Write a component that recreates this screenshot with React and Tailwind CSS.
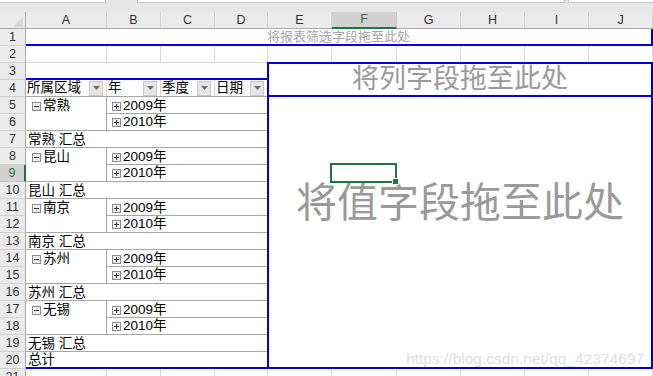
const F = "font-['Liberation_Sans','Noto_Sans_CJK_SC',sans-serif]";
const LIGHT = "border-[#d9d9d9]";
const PIV = "border-[#a6a6a6]";
const BLUE = "border-[#0000e6]";

const columns = [
  { id: "A", w: "w-[81px]" },
  { id: "B", w: "w-[54px]" },
  { id: "C", w: "w-[54px]" },
  { id: "D", w: "w-[53px]" },
  { id: "E", w: "w-[64px]" },
  { id: "F", w: "w-[65px]", active: true },
  { id: "G", w: "w-[64px]" },
  { id: "H", w: "w-[64px]" },
  { id: "I", w: "w-[64px]" },
  { id: "J", w: "w-[64px]" },
];

const cities = ["常熟", "昆山", "南京", "苏州", "无锡"];

function Toggle({ plus }) {
  return (
    <svg width="9" height="9" viewBox="0 0 9 9" className="shrink-0">
      <rect x="0.5" y="0.5" width="8" height="8" fill="#efefef" stroke="#8c8c8c" />
      <path d="M2 4.5h5" stroke="#3a3a3a" />
      {plus && <path d="M4.5 2v5" stroke="#3a3a3a" />}
    </svg>
  );
}

function DropButton() {
  return (
    <span className="w-[14px] h-[15px] mr-[3px] bg-[#e6e6e6] border border-[#c8c8c8] flex items-center justify-center shrink-0">
      <svg width="7" height="4" viewBox="0 0 7 4">
        <path d="M0 0h7L3.5 4z" fill="#6b6b6b" />
      </svg>
    </span>
  );
}

function TopStrip() {
  return (
    <div className="h-[12px] bg-[#e6e6e6] flex items-start">
      <div className="w-[106px] h-[3px] bg-white border-b border-r border-[#c6c6c6]" />
      <div className="ml-[31px] w-[428px] h-[3px] bg-white border-b border-x border-[#c6c6c6]" />
      <div className="ml-[3px] flex-1 h-[3px] bg-white border-b border-l border-[#c6c6c6]" />
    </div>
  );
}

function ColumnHeaders() {
  return (
    <div className="flex h-[17px] bg-[#ebebeb] text-[12.5px] text-[#333]">
      <div className="w-[26px] border-r border-b border-[#ababab] flex items-end justify-end pr-[2px] pb-[1px]">
        <svg width="10" height="10" viewBox="0 0 10 10">
          <path d="M10 0V10H0Z" fill="#d6d6d6" />
        </svg>
      </div>
      {columns.map((c) =>
        c.active ? (
          <div
            key={c.id}
            className={`${c.w} bg-[#d2d2d2] text-[#217346] border-r border-[#c6c6c6] border-b-2 border-b-[#217346] flex items-center justify-center`}
          >
            {c.id}
          </div>
        ) : (
          <div
            key={c.id}
            className={`${c.w} border-r border-[#d0d0d0] border-b border-b-[#ababab] flex items-center justify-center`}
          >
            {c.id}
          </div>
        )
      )}
    </div>
  );
}

function RowHeaders() {
  const rows = Array.from({ length: 21 }, (_, i) => i + 1);
  return (
    <div className="w-[26px] flex flex-col bg-[#ebebeb] text-[12.5px] text-[#333]">
      {rows.map((n) =>
        n === 9 ? (
          <div
            key={n}
            className="h-[17px] shrink-0 bg-[#d2d2d2] text-[#217346] border-b border-[#c6c6c6] border-r-2 border-r-[#217346] flex items-center justify-center"
          >
            {n}
          </div>
        ) : (
          <div
            key={n}
            className="h-[17px] shrink-0 border-b border-[#d0d0d0] border-r border-r-[#ababab] flex items-center justify-center"
          >
            {n}
          </div>
        )
      )}
    </div>
  );
}

function HeaderCell({ label, w, last }) {
  return (
    <div className={`${w} flex items-center justify-between ${last ? "" : `border-r ${LIGHT}`}`}>
      <span className="pl-[1px] pt-[1px]">{label}</span>
      <DropButton />
    </div>
  );
}

function CityGroup({ city }) {
  return (
    <>
      <div className={`flex h-[34px] border-b ${PIV}`}>
        <div className={`w-[81px] border-r ${PIV}`}>
          <div className="h-[17px] flex items-center pl-[6px] pt-[2px]">
            <Toggle />
            <span className="ml-[2px]">{city}</span>
          </div>
        </div>
        <div className="flex-1 flex flex-col">
          <div className={`h-[17px] border-b ${PIV} flex items-center pl-[5px] pt-[2px]`}>
            <Toggle plus />
            <span className="ml-[2px]">2009年</span>
          </div>
          <div className="h-[16px] flex items-center pl-[5px] pt-[1px]">
            <Toggle plus />
            <span className="ml-[2px]">2010年</span>
          </div>
        </div>
      </div>
      <div className={`h-[17px] border-b ${PIV} flex items-center pl-[2px] pt-[2px]`}>
        {city} 汇总
      </div>
    </>
  );
}

function RowArea() {
  return (
    <div className="w-[241px] flex flex-col text-[13.5px]">
      <div className={`flex h-[17px] border-b ${LIGHT}`}>
        <div className={`w-[81px] border-r ${LIGHT}`} />
        <div className={`w-[54px] border-r ${LIGHT}`} />
        <div className={`w-[54px] border-r ${LIGHT}`} />
        <div className="flex-1" />
      </div>
      <div className={`h-[17px] border-b-2 ${BLUE}`} />
      <div className={`flex h-[17px] border-b ${PIV}`}>
        <HeaderCell label="所属区域" w="w-[81px]" />
        <HeaderCell label="年" w="w-[54px]" />
        <HeaderCell label="季度" w="w-[54px]" />
        <HeaderCell label="日期" w="w-[52px]" last />
      </div>
      {cities.map((c) => (
        <CityGroup key={c} city={c} />
      ))}
      <div className={`h-[17px] border-b-2 ${BLUE} flex items-center pl-[2px] pt-[1px]`}>总计</div>
    </div>
  );
}

function DropArea() {
  return (
    <div className="w-[386px] flex flex-col">
      <div className="flex h-[16px]">
        <div className={`w-[65px] border-x ${LIGHT}`} />
        <div className={`w-[65px] border-r ${LIGHT}`} />
        <div className={`w-[64px] border-r ${LIGHT}`} />
        <div className={`w-[64px] border-r ${LIGHT}`} />
        <div className={`w-[64px] border-r ${LIGHT}`} />
        <div className={`w-[64px] border-r ${LIGHT}`} />
      </div>
      <div className={`h-[35px] border-2 ${BLUE} flex items-center justify-center text-[27px] leading-none text-[#9a9a9a]`}>
        将列字段拖至此处
      </div>
      <div className={`relative h-[272px] border-x-2 border-b-2 ${BLUE} flex justify-center pt-[86px] text-[41px] leading-none text-[#9a9a9a]`}>
        将值字段拖至此处
        <div className="absolute left-[61px] top-[66px] w-[67px] h-[20px] border-2 border-[#217346]" />
        <div className="absolute left-[123px] top-[81px] w-[7px] h-[7px] bg-[#217346] border border-white" />
        <div className="absolute right-[7px] bottom-[1px] text-[15.5px] leading-none text-[#e0e0e0] font-['Liberation_Sans',sans-serif]">
          https://blog.csdn.net/qq_42374697
        </div>
      </div>
    </div>
  );
}

function Row21() {
  return (
    <div className="flex h-[17px]">
      {columns.map((c) => (
        <div key={c.id} className={`${c.w} border-r ${LIGHT}`} />
      ))}
    </div>
  );
}

export default function App() {
  return (
    <div className={`w-[653px] h-[376px] overflow-hidden bg-white ${F} text-black`}>
      <TopStrip />
      <ColumnHeaders />
      <div className="flex">
        <RowHeaders />
        <div className="w-[627px] flex flex-col">
          <div
            className={`h-[17px] border-b-2 border-r-2 ${BLUE} flex items-center justify-center text-[13px] text-[#a6a6a6]`}
          >
            将报表筛选字段拖至此处
          </div>
          <div className="flex">
            <RowArea />
            <DropArea />
          </div>
          <Row21 />
        </div>
      </div>
    </div>
  );
}
